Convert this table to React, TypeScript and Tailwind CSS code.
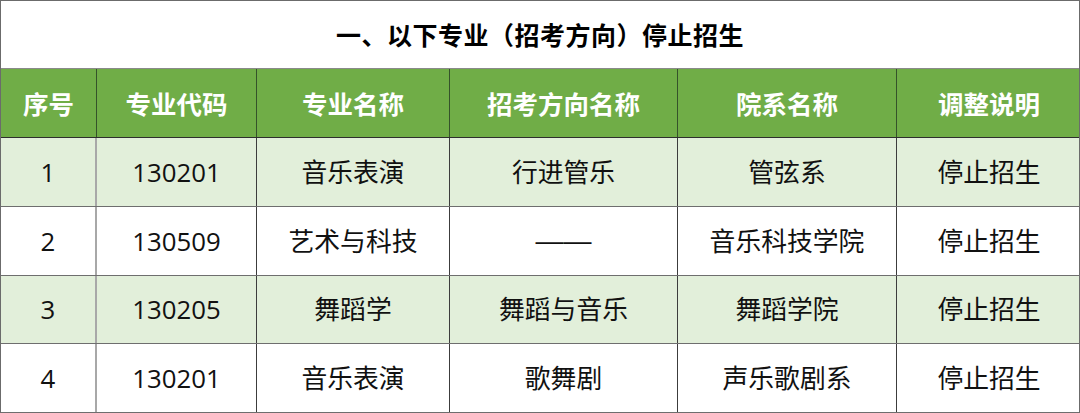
const cols = 'grid grid-cols-[96px_160px_193px_228px_219px_184px]';

const headers = ['序号', '专业代码', '专业名称', '招考方向名称', '院系名称', '调整说明'];

const rows = [
  { no: '1', code: '130201', major: '音乐表演', dir: '行进管乐', dept: '管弦系', note: '停止招生', h: 'h-[69px]', shade: true },
  { no: '2', code: '130509', major: '艺术与科技', dir: '——', dept: '音乐科技学院', note: '停止招生', h: 'h-[69px]', shade: false },
  { no: '3', code: '130205', major: '舞蹈学', dir: '舞蹈与音乐', dept: '舞蹈学院', note: '停止招生', h: 'h-[68px]', shade: true },
  { no: '4', code: '130201', major: '音乐表演', dir: '歌舞剧', dept: '声乐歌剧系', note: '停止招生', h: 'h-[69px]', shade: false },
];

function Cell({ children, first, last }: { children: React.ReactNode; first?: boolean; last?: boolean }) {
  return (
    <div
      className={
        'flex items-center justify-center ' +
        (last ? '' : first ? 'border-r-2 border-r-[#a8a8a8]' : 'border-r border-r-[#3c3c3c]')
      }
    >
      {children}
    </div>
  );
}

export default function App() {
  return (
    <div
      className="w-[1080px] h-[413px] overflow-hidden bg-white border-t border-x border-[#6b6b6b] text-[#111]"
      style={{ fontFamily: '"Open Sans", "Noto Sans CJK SC", sans-serif' }}
    >
      {/* Title */}
      <div className="h-[68px] flex items-center justify-center border-b border-[#8a8a8a]">
        <h1 className="text-[25px] font-bold text-black tracking-[0.5px]" style={{ fontFamily: '"Noto Sans CJK SC", sans-serif' }}>
          一、以下专业（招考方向）停止招生
        </h1>
      </div>

      {/* Header */}
      <div className={cols + ' h-[69px] bg-[#70ad47] border-b border-[#2e2e2e] text-white font-bold text-[25.5px]'}>
        {headers.map((h, i) => (
          <div
            key={h}
            className={'flex items-center justify-center ' + (i < headers.length - 1 ? 'border-r border-r-[#35522a]' : '')}
            style={{ fontFamily: '"Noto Sans CJK SC", sans-serif' }}
          >
            {h}
          </div>
        ))}
      </div>

      {/* Body */}
      {rows.map((r, idx) => (
        <div
          key={idx}
          className={
            cols + ' ' + r.h + ' border-b border-[#6e6e6e] text-[25.8px] ' + (r.shade ? 'bg-[#e2efda]' : 'bg-white')
          }
        >
          <Cell first>{r.no}</Cell>
          <Cell>{r.code}</Cell>
          <Cell>{r.major}</Cell>
          <Cell>
            {r.dir === '——' ? (
              <span className="font-['Liberation_Sans',sans-serif] text-[28px]">——</span>
            ) : (
              r.dir
            )}
          </Cell>
          <Cell>{r.dept}</Cell>
          <Cell last>{r.note}</Cell>
        </div>
      ))}
    </div>
  );
}
